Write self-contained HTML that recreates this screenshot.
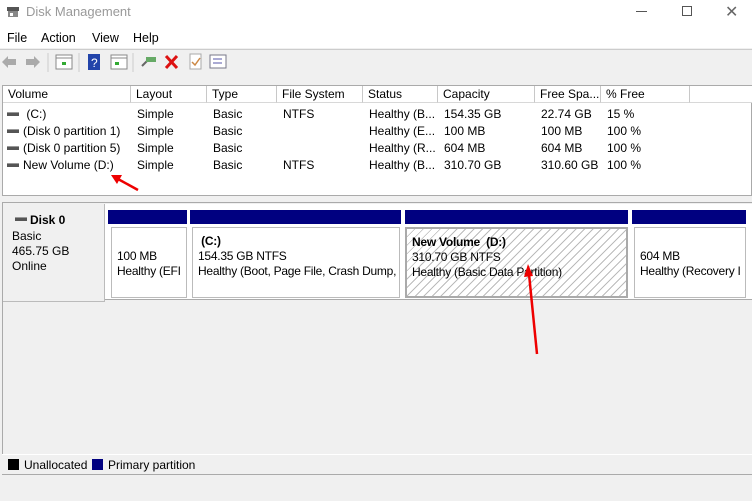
<!DOCTYPE html>
<html><head><meta charset="utf-8"><style>
*{margin:0;padding:0;box-sizing:border-box}
body{width:752px;height:501px;overflow:hidden;background:#f0f0f0;font-family:"Liberation Sans",sans-serif;font-size:12px;color:#000;position:relative}
.a{position:absolute}
.t{white-space:nowrap}
.hd{position:absolute;top:86px;height:17px;border-right:1px solid #c8c8c8;padding-left:5px;line-height:16px;background:#fff;border-bottom:1px solid #d8d8d8}
.dr{position:absolute;width:12px;height:4px;background:#555;border-top:1px solid #999}
.bar{position:absolute;top:210px;height:14px;background:#000080}
.box{position:absolute;top:227px;height:71px;background:#fff;border:1px solid #bbb;padding:6px 5px;line-height:15px;white-space:nowrap;overflow:hidden;letter-spacing:-0.25px}
</style></head><body>
<!-- title -->
<div class="a" style="left:0;top:0;width:752px;height:48px;background:#fff"></div>
<svg class="a" style="left:6px;top:5px" width="14" height="14"><rect x="1" y="2" width="12" height="4" fill="#555"/><rect x="2" y="6" width="10" height="6" fill="#888"/><rect x="4" y="8" width="3" height="3" fill="#fff"/></svg>
<div class="a t" style="left:26px;top:4px;font-size:13px;color:#999">Disk Management</div>
<div class="a" style="left:636px;top:11px;width:11px;height:1px;background:#555"></div>
<div class="a" style="left:682px;top:6px;width:10px;height:10px;border:1px solid #555"></div>
<div class="a t" style="left:725px;top:2px;font-size:16px;color:#666">✕</div>
<div class="a t" style="left:7px;top:31px;font-size:12.5px">File</div>
<div class="a t" style="left:41px;top:31px;font-size:12.5px">Action</div>
<div class="a t" style="left:92px;top:31px;font-size:12.5px">View</div>
<div class="a t" style="left:133px;top:31px;font-size:12.5px">Help</div>
<div class="a" style="left:0;top:49px;width:752px;height:1px;background:#ccc"></div>
<!-- toolbar -->
<svg class="a" style="left:0;top:50px" width="240" height="26">
<path d="M2 12 L8 6 L8 9 L16 9 L16 15 L8 15 L8 18 Z" fill="#aaa"/>
<path d="M40 12 L34 6 L34 9 L26 9 L26 15 L34 15 L34 18 Z" fill="#aaa"/>
<line x1="48" y1="3" x2="48" y2="22" stroke="#ccc"/>
<rect x="56" y="5" width="16" height="14" fill="#fff" stroke="#888"/><line x1="56" y1="8" x2="72" y2="8" stroke="#888"/><rect x="62" y="12" width="4" height="3" fill="#3a3"/>
<line x1="79" y1="3" x2="79" y2="22" stroke="#ccc"/>
<rect x="88" y="4" width="12" height="16" fill="#2244aa"/><text x="91" y="17" fill="#fff" font-size="12" font-family="Liberation Sans">?</text>
<rect x="111" y="5" width="16" height="14" fill="#fff" stroke="#888"/><line x1="111" y1="8" x2="127" y2="8" stroke="#888"/><rect x="115" y="12" width="4" height="3" fill="#3a3"/>
<line x1="133" y1="3" x2="133" y2="22" stroke="#ccc"/>
<path d="M142 16 L148 10" stroke="#666" stroke-width="2"/><rect x="146" y="7" width="10" height="5" fill="#6a6"/>
<path d="M166 6 L177 18 M177 6 L166 18" stroke="#d11" stroke-width="3"/>
<rect x="190" y="4" width="11" height="15" fill="#fff" stroke="#aaa"/><path d="M192 12 L195 15 L200 8" stroke="#c84" stroke-width="1.5" fill="none"/>
<rect x="210" y="5" width="16" height="13" fill="#fff" stroke="#778"/><line x1="213" y1="9" x2="222" y2="9" stroke="#55a"/><line x1="213" y1="13" x2="222" y2="13" stroke="#55a"/>
</svg>
<!-- list -->
<div class="a" style="left:2px;top:85px;width:750px;height:111px;background:#fff;border:1px solid #aaa"></div>
<div class="hd" style="left:3px;width:128px">Volume</div>
<div class="hd" style="left:131px;width:76px">Layout</div>
<div class="hd" style="left:207px;width:70px">Type</div>
<div class="hd" style="left:277px;width:86px">File System</div>
<div class="hd" style="left:363px;width:75px">Status</div>
<div class="hd" style="left:438px;width:97px">Capacity</div>
<div class="hd" style="left:535px;width:66px">Free Spa...</div>
<div class="hd" style="left:601px;width:89px">% Free</div>
<div class="hd" style="left:690px;width:62px;border-right:none"></div>
<div class="dr" style="left:7px;top:112px"></div><div class="dr" style="left:7px;top:129px"></div><div class="dr" style="left:7px;top:146px"></div><div class="dr" style="left:7px;top:163px"></div>
<div class="a t" style="left:23px;top:106px;line-height:17px">&nbsp;(C:)<br>(Disk 0 partition 1)<br>(Disk 0 partition 5)<br>New Volume (D:)</div>
<div class="a t" style="left:137px;top:106px;line-height:17px">Simple<br>Simple<br>Simple<br>Simple</div>
<div class="a t" style="left:213px;top:106px;line-height:17px">Basic<br>Basic<br>Basic<br>Basic</div>
<div class="a t" style="left:283px;top:106px;line-height:17px">NTFS<br><br><br>NTFS</div>
<div class="a t" style="left:369px;top:106px;line-height:17px">Healthy (B...<br>Healthy (E...<br>Healthy (R...<br>Healthy (B...</div>
<div class="a t" style="left:444px;top:106px;line-height:17px">154.35 GB<br>100 MB<br>604 MB<br>310.70 GB</div>
<div class="a t" style="left:541px;top:106px;line-height:17px">22.74 GB<br>100 MB<br>604 MB<br>310.60 GB</div>
<div class="a t" style="left:607px;top:106px;line-height:17px">15 %<br>100 %<br>100 %<br>100 %</div>
<!-- disk area -->
<div class="a" style="left:2px;top:202px;width:750px;height:252px;border-left:1px solid #aaa;border-top:1px solid #aaa"></div>
<div class="a" style="left:3px;top:204px;width:102px;height:98px;background:#f0f0f0;border-right:1px solid #bbb;border-bottom:1px solid #bbb"></div>
<div class="a" style="left:105px;top:204px;width:647px;height:96px;background:#fff;border-bottom:1px solid #aaa"></div>
<div class="dr" style="left:15px;top:217px"></div>
<div class="a t" style="left:30px;top:213px;font-weight:bold">Disk 0</div>
<div class="a t" style="left:12px;top:229px;line-height:15px">Basic<br>465.75 GB<br>Online</div>
<div class="bar" style="left:108px;width:79px"></div>
<div class="bar" style="left:190px;width:211px"></div>
<div class="bar" style="left:405px;width:223px"></div>
<div class="bar" style="left:632px;width:114px"></div>
<div class="box" style="left:111px;width:76px;padding-top:21px">100 MB<br>Healthy (EFI</div>
<div class="box" style="left:192px;width:208px"><b>&nbsp;(C:)</b><br>154.35 GB NTFS<br>Healthy (Boot, Page File, Crash Dump,</div>
<div class="box" style="left:405px;width:223px;border:2px solid #aaa;background:repeating-linear-gradient(135deg,#fff 0 5px,#bbb 5px 6px)"><b>New Volume&nbsp; (D:)</b><br>310.70 GB NTFS<br>Healthy (Basic Data Partition)</div>
<div class="box" style="left:634px;width:112px;padding-top:21px">604 MB<br>Healthy (Recovery I</div>
<!-- legend -->
<div class="a" style="left:2px;top:454px;width:750px;height:21px;border-top:1px solid #fff;border-bottom:1px solid #aaa"></div>
<div class="a" style="left:8px;top:459px;width:11px;height:11px;background:#000"></div>
<div class="a t" style="left:24px;top:458px">Unallocated</div>
<div class="a" style="left:92px;top:459px;width:11px;height:11px;background:#000080"></div>
<div class="a t" style="left:108px;top:458px">Primary partition</div>
<!-- arrows -->
<svg class="a" style="left:0;top:0" width="752" height="501">
<line x1="138" y1="190" x2="118" y2="179" stroke="#e00" stroke-width="2.5"/>
<path d="M111 175 L122 175 L117 184 Z" fill="#e00"/>
<line x1="537" y1="354" x2="529" y2="274" stroke="#e00" stroke-width="2.5"/>
<path d="M528 264 L533 276 L524 277 Z" fill="#e00"/>
</svg>
</body></html>
